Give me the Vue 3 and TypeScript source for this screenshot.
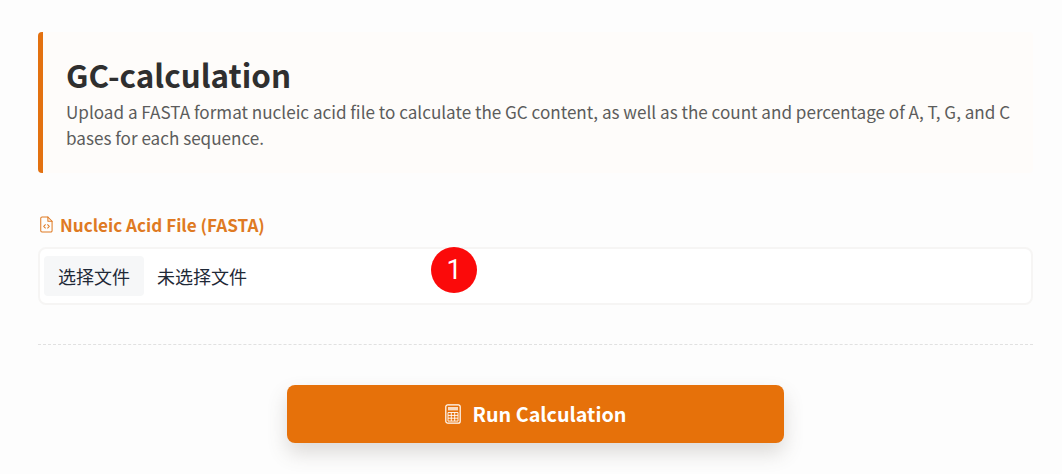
<script setup lang="ts">
const title: string = 'GC-calculation'
const description: string =
  'Upload a FASTA format nucleic acid file to calculate the GC content, as well as the count and percentage of A, T, G, and C bases for each sequence.'
</script>

<template>
  <main class="page">
    <header class="intro">
      <h1 class="title">{{ title }}</h1>
      <p class="desc">{{ description }}</p>
    </header>

    <section class="field">
      <label class="label">
        <svg class="file-icon" viewBox="0 0 14 18" fill="none" stroke="currentColor" stroke-width="1.1" stroke-linecap="round" stroke-linejoin="round">
          <path d="M2.2 1h6.3L13 5.5v10.2a1.4 1.4 0 0 1-1.4 1.4H2.2a1.4 1.4 0 0 1-1.4-1.4V2.4A1.4 1.4 0 0 1 2.2 1z" />
          <path d="M8.5 1v4.5H13" />
          <path d="M5.8 9.2 4 11l1.8 1.8M8.2 9.2 10 11l-1.8 1.8" />
        </svg>
        <span>Nucleic Acid File (FASTA)</span>
      </label>
      <div class="file-box">
        <span class="file-btn">选择文件</span>
        <span class="file-name">未选择文件</span>
        <span class="badge">1</span>
      </div>
    </section>

    <div class="actions">
      <button class="run" type="button">
        <svg class="calc-icon" viewBox="0 0 16 20" fill="none" stroke="currentColor" stroke-width="1.2">
          <rect x="0.8" y="0.8" width="14.4" height="18.4" rx="2" />
          <rect x="3" y="3" width="10" height="3.4" fill="currentColor" fill-opacity="0.75" stroke="none" />
          <path stroke-width="0.9" d="M3 8.5h10v8.6H3zM3 11.4h10M3 14.2h10M6.3 8.5v8.6M9.7 8.5v8.6" />
        </svg>
        <span class="run-text">Run Calculation</span>
      </button>
    </div>
  </main>
</template>

<style>
html,
body {
  margin: 0;
  background: #fdfdfd;
}
</style>

<style scoped>
.page {
  box-sizing: border-box;
  width: 1062px;
  height: 474px;
  padding: 32px 29px 0 38px;
  overflow: hidden;
  font-family: "Noto Sans CJK SC", "Noto Sans", sans-serif;
  background: #fdfdfd;
}
.intro {
  box-sizing: border-box;
  height: 141px;
  padding: 22px 17px 0 23px;
  border-left: 5px solid #e37110;
  border-radius: 4px;
  background: #fefcfa;
}
.title {
  margin: 0 0 3px;
  font-size: 31.4px;
  line-height: 42px;
  font-weight: 700;
  color: #2f2f2f;
}
.desc {
  margin: 0;
  font-size: 17.1px;
  line-height: 26px;
  color: #5c5c5c;
}
.field {
  margin-top: 39px;
}
.label {
  display: flex;
  align-items: center;
  gap: 7px;
  height: 24px;
  padding-left: 2px;
  font-size: 17.1px;
  font-weight: 600;
  color: #df7a23;
}
.file-icon {
  width: 13px;
  height: 17px;
}
.file-box {
  position: relative;
  box-sizing: border-box;
  display: flex;
  align-items: center;
  height: 58px;
  margin-top: 11px;
  padding: 0 4px;
  border: 2px solid #f6f5f4;
  border-radius: 8px;
  background: #ffffff;
  font-size: 18px;
  color: #1f2937;
}
.file-btn {
  display: flex;
  align-items: center;
  justify-content: center;
  width: 100px;
  height: 40px;
  margin-top: -1px;
  border-radius: 4px;
  background: #f6f7f8;
}
.file-name {
  margin-top: -1px;
  margin-left: 13px;
}
.badge {
  position: absolute;
  left: 391px;
  top: -2px;
  width: 46px;
  height: 46px;
  border-radius: 50%;
  background: #fb0a0a;
  color: #fff;
  display: flex;
  align-items: center;
  justify-content: center;
  font-family: Roboto, sans-serif;
  font-weight: 400;
  font-size: 27px;
}
.actions {
  display: flex;
  justify-content: center;
  margin-top: 39px;
  padding-top: 40px;
  border-top: 1px dashed #e1e1e1;
}
.run {
  display: flex;
  align-items: center;
  justify-content: center;
  gap: 12px;
  width: 497px;
  height: 58px;
  padding: 0 0 0 1px;
  margin-right: 1px;
  border: 0;
  border-radius: 8px;
  background: #e6710a;
  color: #fff;
  font-family: inherit;
  font-size: 19.75px;
  font-weight: 600;
  box-shadow: 0 10px 20px rgba(90, 80, 70, 0.2);
}
.run-text {
  margin-bottom: 2px;
}
.calc-icon {
  width: 16px;
  height: 20px;
}
</style>
